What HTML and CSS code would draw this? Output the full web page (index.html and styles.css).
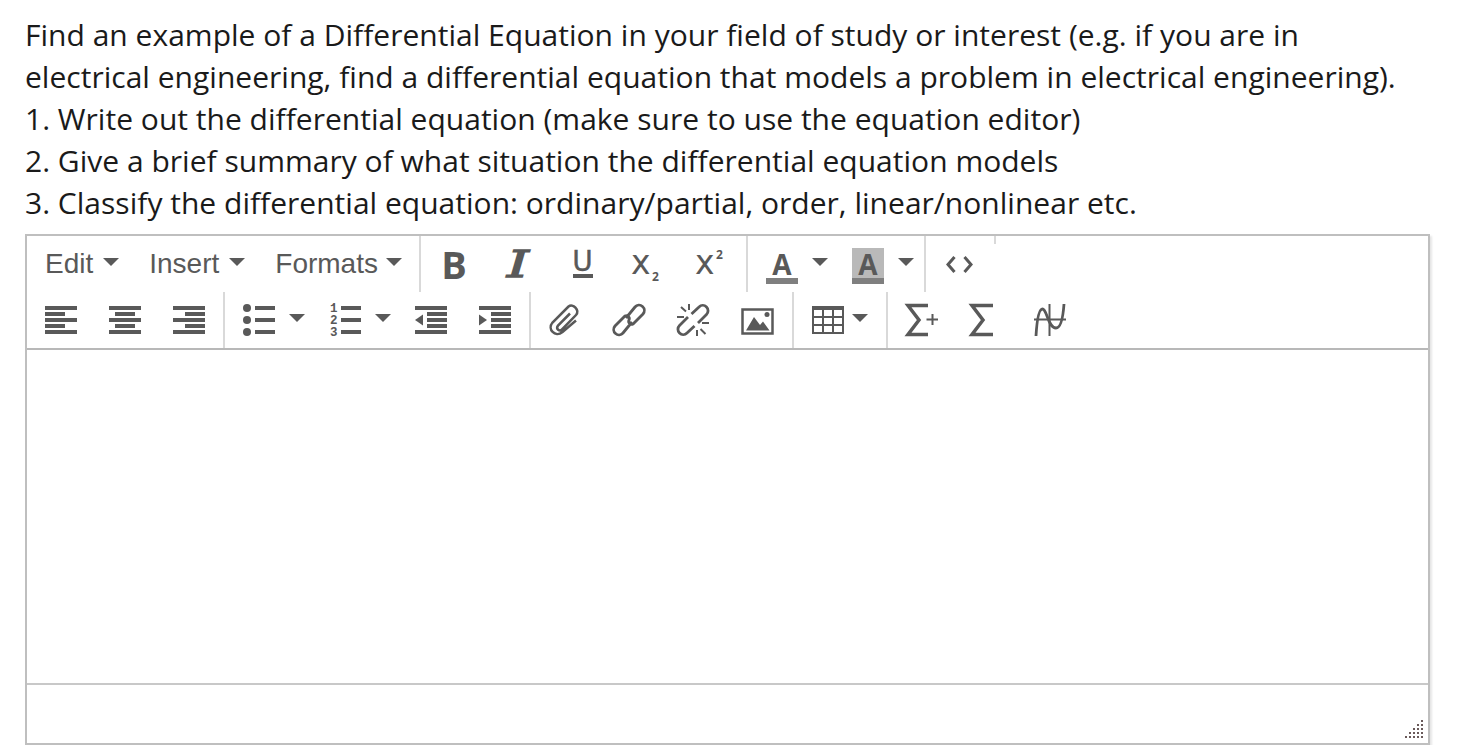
FILE: index.html
```html
<!DOCTYPE html>
<html lang="en">
<head>
<meta charset="utf-8">
<title>Discussion prompt</title>
<link rel="stylesheet" href="styles.css">
</head>
<body>
<main class="page">
  <div class="prompt">
    <p>Find an example of a Differential Equation in your field of study or interest (e.g. if you are in</p>
    <p>electrical engineering, find a differential equation that models a problem in electrical engineering).</p>
    <p>1. Write out the differential equation (make sure to use the equation editor)</p>
    <p>2. Give a brief summary of what situation the differential equation models</p>
    <p>3. Classify the differential equation: ordinary/partial, order, linear/nonlinear etc.</p>
  </div>
  <section class="editor">
    <div class="toolbar">
      <div class="row">
        <div class="group">
          <div class="menu">Edit<span class="caret"></span></div>
          <div class="menu">Insert<span class="caret"></span></div>
          <div class="menu">Formats<span class="caret"></span></div>
        </div>
        <div class="group group-format">
          <div class="btn"><span class="glyph bold">B</span></div>
          <div class="btn"><span class="glyph italic">I</span></div>
          <div class="btn"><span class="glyph under">U</span></div>
          <div class="btn"><span class="glyph script">x<span class="sub">2</span></span></div>
          <div class="btn"><span class="glyph script">x<span class="sup">2</span></span></div>
        </div>
        <div class="group group-color">
          <div class="btn split"><span class="glyph color">A</span><span class="caret"></span></div>
          <div class="btn split"><span class="glyph color marked">A</span><span class="caret"></span></div>
        </div>
        <div class="group group-code">
          <div class="btn"><svg class="icon" viewBox="0 0 32 32"><path class="line code" d="M11.500 9 5 16.500 11.500 24M21.500 9 28 16.500 21.500 24"/></svg></div>
        </div>
        <div class="tick"></div>
      </div>
      <div class="row">
        <div class="group">
          <div class="btn"><svg class="icon crisp" viewBox="0 0 32 32"><path d="M0 2h32v4H0zM0 8h20v4H0zM0 14h32v4H0zM0 20h20v4H0zM0 26h32v4H0z"/></svg></div>
          <div class="btn"><svg class="icon crisp" viewBox="0 0 32 32"><path d="M0 2h32v4H0zM6 8h20v4H6zM0 14h32v4H0zM6 20h20v4H6zM0 26h32v4H0z"/></svg></div>
          <div class="btn"><svg class="icon crisp" viewBox="0 0 32 32"><path d="M0 2h32v4H0zM12 8h20v4H12zM0 14h32v4H0zM12 20h20v4H12zM0 26h32v4H0z"/></svg></div>
        </div>
        <div class="group">
          <div class="btn split list"><svg class="icon" viewBox="0 0 32 32"><circle cx="4" cy="4" r="4"/><circle cx="4" cy="16" r="4"/><circle cx="4" cy="28" r="4"/><path d="M12 2h20v4H12zM12 14h20v4H12zM12 26h20v4H12z"/></svg><span class="caret"></span></div>
          <div class="btn split list"><svg class="icon" viewBox="0 0 32 32"><text class="digit" x="1" y="8">1</text><text class="digit" x="1" y="20">2</text><text class="digit" x="1" y="32">3</text><path d="M12 2h20v4H12zM12 14h20v4H12zM12 26h20v4H12z"/></svg><span class="caret"></span></div>
          <div class="btn"><svg class="icon crisp" viewBox="0 0 32 32"><path d="M0 2h32v4H0zM12 8h20v4H12zM12 14h20v4H12zM12 20h20v4H12zM0 26h32v4H0z"/><path class="soft" d="M8 10.500V21.500L0 16z"/></svg></div>
          <div class="btn"><svg class="icon crisp" viewBox="0 0 32 32"><path d="M0 2h32v4H0zM12 8h20v4H12zM12 14h20v4H12zM12 20h20v4H12zM0 26h32v4H0z"/><path class="soft" d="M0 10.500V21.500L8 16z"/></svg></div>
        </div>
        <div class="group group-insert">
          <div class="btn"><svg class="icon" viewBox="0 0 32 32"><path class="line" d="M21 9.500 9 21.500C6.500 25 10.500 28 13 25.500L27 11C31 6 24-1 19.500 2.500L3.500 18.500C-2 25 6 34 13.500 28L27 16.500"/></svg></div>
          <div class="btn"><svg class="icon" viewBox="0 0 32 32"><path class="line chain" d="M13 14 22 3A5 5 0 0 1 30 10L20 20A3 3 0 0 1 16 16M19 18 10 29A5 5 0 0 1 2 22L12 12A3 3 0 0 1 16 16"/></svg></div>
          <div class="btn"><svg class="icon" viewBox="0 0 32 32"><path class="line chain" d="M14.500 10 22 3A5 5 0 0 1 29.500 10.500L21 19M17.500 22 10 29A5 5 0 0 1 2.500 21.500L11 13"/><path class="thin" d="M12 0V6M4 3 9 7.500M0 13H7M20 26V32M23.500 25 28.500 30M25 19H32"/></svg></div>
          <div class="btn"><svg class="icon" viewBox="0 0 32 32"><path class="frame" d="M1.500 5.500h30v24h-30z"/><path d="M5 26.500 13 13 19 21 22 17.500 28.500 26.500z"/><circle cx="26" cy="10.500" r="2.500"/></svg></div>
        </div>
        <div class="group">
          <div class="btn split table"><svg class="icon crisp" viewBox="0 0 32 32"><path d="M0 2h32v4H0zM0 2h2v28H0zM10 2h2v28h-2zM20 2h2v28h-2zM30 2h2v28h-2zM0 12h32v2H0zM0 20h32v2H0zM0 28h32v2H0z"/></svg><span class="caret"></span></div>
        </div>
        <div class="group group-math">
          <div class="btn"><svg class="icon" viewBox="0 0 32 32"><path class="line sigma" d="M22 1.500H2L13 16 2 30.500H22"/><path class="thin" d="M20.500 15.500H32M26.500 10V21"/></svg></div>
          <div class="btn"><svg class="icon" viewBox="0 0 32 32"><path class="line sigma" d="M23 1.500H2L13 16 2 30.500H23"/></svg></div>
          <div class="btn"><svg class="icon" viewBox="0 0 32 32"><path class="axis" d="M0 15.500H32M15.500 0V32"/><path class="line curve" d="M2 32C3 15 5 5 8.500 5 13 5 14 24 22 24 27 24 29 14 30 0"/></svg></div>
        </div>
      </div>
    </div>
    <div class="edit-area"></div>
    <div class="statusbar">
      <svg class="grip" viewBox="0 0 18 18"><path d="M16 0h2v2h-2zM12 4h2v2h-2zM16 4h2v2h-2zM8 8h2v2H8zM12 8h2v2h-2zM16 8h2v2h-2zM4 12h2v2H4zM8 12h2v2H8zM12 12h2v2h-2zM16 12h2v2h-2zM0 16h2v2H0zM4 16h2v2H4zM8 16h2v2H8zM12 16h2v2h-2zM16 16h2v2h-2z"/></svg>
    </div>
  </section>
</main>
</body>
</html>
```
FILE: styles.css
```css
html, body {
  margin: 0;
  background: #fff;
}

.page {
  padding: 14px 0 0 25px;
}

.prompt {
  font-family: "Open Sans", sans-serif;
  font-size: 30px;
  letter-spacing: 0.015px;
  line-height: 42px;
  color: #1a1a1a;
}

.prompt p {
  margin: 0;
  white-space: nowrap;
}

.editor {
  box-sizing: border-box;
  width: 1405px;
  height: 511px;
  margin-top: 10px;
  border: 2px solid #bfbfbf;
  box-shadow: 2px 2px 2px rgba(0, 0, 0, 0.1);
  display: flex;
  flex-direction: column;
  font-family: "Liberation Sans", Arial, sans-serif;
  color: #595959;
}

.toolbar {
  border-bottom: 2px solid #b8b8b8;
}

.row {
  display: flex;
  height: 56px;
}

.group {
  display: flex;
  align-items: center;
  padding: 0 2px;
  border-right: 2px solid #d9d9d9;
}

.group-format {
  padding: 0 4px 0 1px;
}

.group-color {
  padding: 0 2px 0 2px;
}

.group-code {
  padding: 0 3px 0 1px;
  border-right: 0;
}

.group-insert {
  padding-right: 3px;
}

.group-math {
  border-right: 0;
}

.tick {
  width: 2px;
  height: 8px;
  background: #d9d9d9;
}

.menu {
  display: flex;
  align-items: center;
  padding: 0 15px;
  font-size: 28px;
  line-height: 32px;
}

.menu:first-child {
  padding-left: 16px;
}

.menu .caret {
  margin-left: 10px;
}

.menu:last-child .caret {
  margin-left: 8px;
}

.btn {
  display: flex;
  align-items: center;
  box-sizing: border-box;
  width: 64px;
  padding-left: 16px;
}

.btn.split {
  width: 86px;
}

.btn.table {
  width: 88px;
}

.table .caret {
  margin-left: 8px;
}

.caret {
  width: 0;
  height: 0;
  margin-top: -4px;
  margin-left: 14px;
  border-style: solid;
  border-width: 8px 8px 0;
  border-color: #595959 transparent transparent;
}

.icon {
  display: block;
  width: 32px;
  height: 32px;
  flex: none;
  fill: #595959;
  overflow: visible;
}

.crisp {
  shape-rendering: crispEdges;
}

.soft {
  shape-rendering: auto;
}

.line {
  fill: none;
  stroke: #595959;
  stroke-width: 2.500px;
}

.chain {
  stroke-width: 2.800px;
}

.code {
  stroke-width: 3px;
}

.sigma {
  stroke-width: 3.500px;
}

.curve {
  stroke-width: 2.800px;
}

.axis {
  fill: none;
  stroke: #595959;
  stroke-width: 2px;
}

.thin {
  fill: none;
  stroke: #595959;
  stroke-width: 2px;
}

.frame {
  fill: none;
  stroke: #595959;
  stroke-width: 2.500px;
}

.digit {
  font-family: "Liberation Mono", monospace;
  font-size: 12.500px;
  font-weight: 700;
}

.glyph {
  display: block;
  position: relative;
  box-sizing: border-box;
  width: 32px;
  height: 32px;
  flex: none;
  text-align: center;
  font-family: "Open Sans", sans-serif;
}

.bold {
  font-size: 38px;
  font-weight: 700;
  line-height: 32px;
}

.italic {
  font-family: "DejaVu Serif", serif;
  font-size: 37px;
  font-style: italic;
  font-weight: 400;
  line-height: 34px;
  -webkit-text-stroke: 1.300px #595959;
  transform: scaleX(1.5);
}

.under {
  font-family: "DejaVu Sans", sans-serif;
  font-size: 28px;
  font-weight: 400;
  line-height: 28px;
  -webkit-text-stroke: 0.400px #595959;
  padding-left: 1px;
}

.under::after {
  content: "";
  position: absolute;
  left: 7px;
  right: 5px;
  top: 26px;
  height: 4px;
  background: #595959;
}

.script {
  font-family: "DejaVu Sans", sans-serif;
  font-size: 33px;
  font-weight: 400;
  line-height: 30px;
  text-align: left;
  padding-left: 1px;
}

.sub,
.sup {
  position: absolute;
  font-family: "Open Sans", sans-serif;
  font-size: 12px;
  line-height: 12px;
  font-weight: 700;
  left: 22px;
}

.sub {
  top: 23px;
}

.sup {
  top: 1px;
}

.color {
  font-size: 28px;
  font-weight: 700;
  line-height: 32px;
  height: 36px;
  margin-top: 4px;
}

.color::after {
  content: "";
  position: absolute;
  left: 0;
  right: 0;
  top: 30px;
  height: 6px;
  background: #7f7f7f;
}

.marked {
  background: linear-gradient(#b9b9b9, #b9b9b9) no-repeat 0 0 / 32px 32px;
}

.edit-area {
  flex: 1;
}

.statusbar {
  display: flex;
  justify-content: flex-end;
  align-items: flex-end;
  box-sizing: border-box;
  height: 60px;
  padding: 0 5px 5px 0;
  border-top: 2px solid #c8c8c8;
}

.grip {
  display: block;
  width: 18px;
  height: 18px;
  fill: #6a5a5a;
  shape-rendering: crispEdges;
}
```
